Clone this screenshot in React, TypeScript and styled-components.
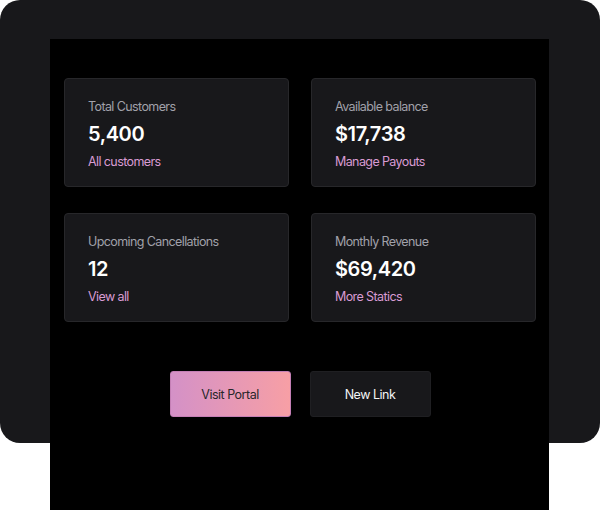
import React from "react";
import styled, { createGlobalStyle } from "styled-components";

const Global = createGlobalStyle`
  html, body { margin: 0; padding: 0; background: #ffffff; }
  body { font-family: Inter, "Noto Sans", "Liberation Sans", sans-serif; -webkit-font-smoothing: antialiased; height: 510px; overflow: hidden; }
`;

const Frame = styled.div`
  width: 600px;
  height: 443px;
  background: #18181b;
  border-radius: 20px;
  padding: 39px 51px 0 50px;
  box-sizing: border-box;
`;

const Panel = styled.div`
  width: 499px;
  height: 471px;
  background: #000000;
  box-sizing: border-box;
  padding: 39px 13px 0 14px;
  display: flex;
  flex-direction: column;
`;

const Grid = styled.div`
  display: grid;
  grid-template-columns: 225px 225px;
  column-gap: 22px;
  row-gap: 26px;
`;

const Card = styled.div`
  height: 109px;
  box-sizing: border-box;
  background: #18181b;
  border: 1px solid #27272a;
  border-radius: 4px;
  padding: 20px 23px;
  display: flex;
  flex-direction: column;
`;

const Label = styled.div`
  font-size: 12.5px;
  line-height: 16px;
  color: #a1a1aa;
  letter-spacing: -0.6px;
`;

const Value = styled.div`
  margin-top: 6px;
  font-size: 20px;
  line-height: 26px;
  font-weight: 600;
  color: #ffffff;
  letter-spacing: -0.4px;
`;

const LinkText = styled.a`
  margin-top: 7px;
  font-size: 12.5px;
  line-height: 16px;
  color: #d99bd3;
  text-decoration: none;
  letter-spacing: -0.6px;
`;

const Actions = styled.div`
  display: flex;
  justify-content: center;
  gap: 19px;
  margin-top: 49px;
`;

const Button = styled.button<{ $primary?: boolean }>`
  width: 121px;
  height: 46px;
  border-radius: 3px;
  font-family: inherit;
  font-size: 12.5px;
  letter-spacing: -0.5px;
  cursor: pointer;
  border: 1px solid ${(p) => (p.$primary ? "#c47fb5" : "#1f1f22")};
  background: ${(p) =>
    p.$primary ? "linear-gradient(90deg, #d491c7 0%, #f79fa5 100%)" : "#18181b"};
  color: ${(p) => (p.$primary ? "#27272a" : "#f4f4f5")};
`;

const stats = [
  { label: "Total Customers", value: "5,400", link: "All customers" },
  { label: "Available balance", value: "$17,738", link: "Manage Payouts" },
  { label: "Upcoming Cancellations", value: "12", link: "View all" },
  { label: "Monthly Revenue", value: "$69,420", link: "More Statics" },
];

export default function App() {
  return (
    <>
      <Global />
      <Frame>
        <Panel>
          <Grid>
            {stats.map((s) => (
              <Card key={s.label}>
                <Label>{s.label}</Label>
                <Value>{s.value}</Value>
                <LinkText href="#">{s.link}</LinkText>
              </Card>
            ))}
          </Grid>
          <Actions>
            <Button $primary>Visit Portal</Button>
            <Button>New Link</Button>
          </Actions>
        </Panel>
      </Frame>
    </>
  );
}
